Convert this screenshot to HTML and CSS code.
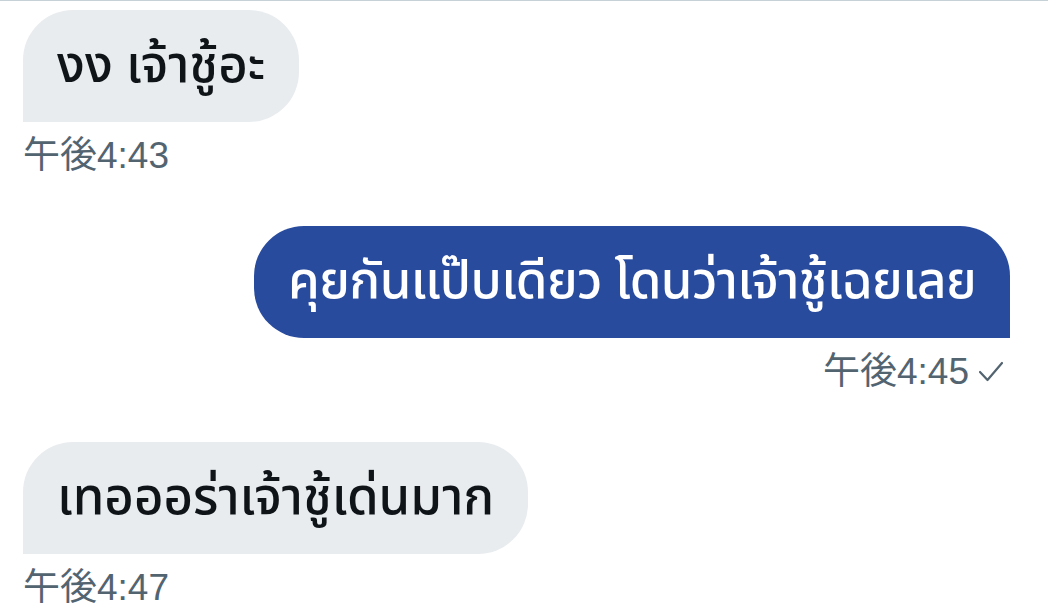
FILE: index.html
```html
<!DOCTYPE html>
<html lang="th">
<head>
<meta charset="utf-8">
<link rel="stylesheet" href="styles.css">
</head>
<body>
<div class="chat">
  <div class="msg in">
    <div class="bubble">งง เจ้าชู้อะ</div>
    <div class="time">午後4:43</div>
  </div>
  <div class="msg out">
    <div class="bubble">คุยกันแป๊บเดียว โดนว่าเจ้าชู้เฉยเลย</div>
    <div class="time">午後4:45 <svg class="check" width="24" height="22" viewBox="0 0 24 22"><polyline points="1,11 8.5,19 23,2" fill="none" stroke="#536471" stroke-width="2.2" stroke-linecap="round" stroke-linejoin="round"/></svg></div>
  </div>
  <div class="msg in">
    <div class="bubble">เทอออร่าเจ้าชู้เด่นมาก</div>
    <div class="time">午後4:47</div>
  </div>
</div>
</body>
</html>
```

FILE: styles.css
```css
html, body {
  margin: 0;
  padding: 0;
  background: #ffffff;
}
body {
  border-top: 1px solid #c6d0d7;
  font-family: "Noto Sans Thai", "Noto Sans", "DejaVu Sans", sans-serif;
}
.chat {
  display: flex;
  flex-direction: column;
  padding: 9px 38px 0 23px;
  gap: 52px;
}
.msg {
  display: flex;
  flex-direction: column;
  gap: 16px;
}
.msg.in { align-items: flex-start; }
.msg.out { align-items: flex-end; }
.bubble {
  height: 112px;
  box-sizing: border-box;
  padding: 0 34px;
  display: flex;
  align-items: center;
  font-size: 51px;
  font-weight: 500;
  color: #0f1419;
  background: #e9ecef;
  border-radius: 50px 50px 50px 0;
  white-space: nowrap;
}
.msg.out .bubble {
  background: #284b9e;
  color: #ffffff;
  border-radius: 50px 50px 0 50px;
  letter-spacing: -0.6px;
}
.time {
  display: flex;
  align-items: center;
  gap: 10px;
  font-family: "Liberation Sans", "Noto Sans CJK JP", sans-serif;
  font-size: 37px;
  line-height: 36px;
  color: #536471;
}
.msg.out .time { padding-right: 7px; }
.check { display: block; }
```
